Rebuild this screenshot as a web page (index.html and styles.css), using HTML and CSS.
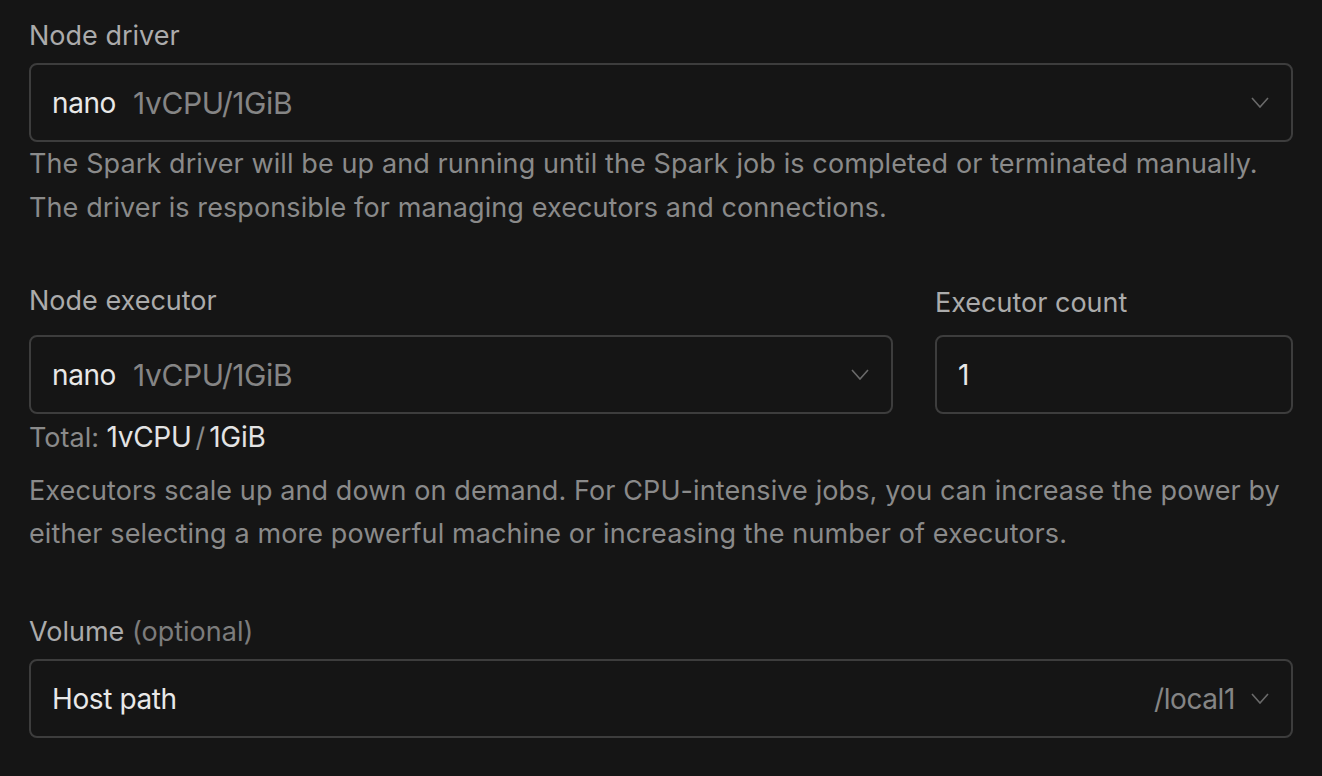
FILE: index.html
```html
<!DOCTYPE html>
<html lang="en">
<head>
<meta charset="utf-8">
<title>Spark settings</title>
<link rel="stylesheet" href="styles.css">
</head>
<body>
<main class="form">
  <section class="field field-driver">
    <label class="label">Node driver</label>
    <div class="select">
      <span class="value"><span class="main">nano</span><span class="sub">1vCPU/1GiB</span></span>
      <svg class="chev" width="18" height="11" viewBox="0 0 18 11"><path d="M1 1 L9 10 L17 1" fill="none" stroke="#6a6a6a" stroke-width="1.6"/></svg>
    </div>
    <p class="help">The Spark driver will be up and running until the Spark job is completed or terminated manually.<br>The driver is responsible for managing executors and connections.</p>
  </section>

  <section class="field field-exec">
    <div class="row">
      <div class="col col-main">
        <label class="label">Node executor</label>
        <div class="select">
          <span class="value"><span class="main">nano</span><span class="sub">1vCPU/1GiB</span></span>
          <svg class="chev" width="18" height="11" viewBox="0 0 18 11"><path d="M1 1 L9 10 L17 1" fill="none" stroke="#6a6a6a" stroke-width="1.6"/></svg>
        </div>
      </div>
      <div class="col col-count">
        <label class="label label-count">Executor count</label>
        <div class="input"><span class="main">1</span></div>
      </div>
    </div>
    <p class="total">Total: <span class="tv">1vCPU</span><span class="slash">/</span><span class="tv">1GiB</span></p>
    <p class="help help-exec">Executors scale up and down on demand. For CPU-intensive jobs, you can increase the power by<br>either selecting a more powerful machine or increasing the number of executors.</p>
  </section>

  <section class="field field-volume">
    <label class="label">Volume <span class="opt">(optional)</span></label>
    <div class="select">
      <span class="value"><span class="main main-lg">Host path</span></span>
      <span class="right"><span class="path">/local1</span>
      <svg class="chev" width="18" height="11" viewBox="0 0 18 11"><path d="M1 1 L9 10 L17 1" fill="none" stroke="#6a6a6a" stroke-width="1.6"/></svg></span>
    </div>
  </section>
</main>
</body>
</html>
```
FILE: styles.css
```css
html, body {
  margin: 0;
  padding: 0;
  background: #151515;
}
body {
  font-family: Inter, "Noto Sans", sans-serif;
  color: #e6e6e6;
  width: 1322px;
  height: 776px;
  overflow: hidden;
}
.form {
  padding: 18px 29px 0 29px;
  display: flex;
  flex-direction: column;
}
.field {
  display: flex;
  flex-direction: column;
}
.label {
  display: block;
  font-size: 27px;
  line-height: 36px;
  color: #ababab;
  margin-bottom: 9px;
}
.opt {
  color: #7c7c7c;
}
.select, .input {
  box-sizing: border-box;
  height: 79px;
  border: 2px solid #3d3d3d;
  border-radius: 8px;
  display: flex;
  align-items: center;
  justify-content: space-between;
  padding: 0 22px 0 21px;
}
.value {
  display: flex;
  align-items: center;
  gap: 17px;
}
.main {
  font-size: 28px;
  letter-spacing: -0.4px;
  color: #e8e8e8;
}
.main-lg {
  font-size: 28px;
  letter-spacing: -0.4px;
}
.sub {
  font-size: 30px;
  letter-spacing: -0.4px;
  color: #858585;
}
.chev {
  display: block;
}
.right {
  display: flex;
  align-items: center;
  gap: 16px;
}
.path {
  font-size: 28px;
  letter-spacing: -0.4px;
  color: #858585;
}
.help {
  margin: 0;
  font-size: 27px;
  line-height: 44px;
  color: #8a8a8a;
  letter-spacing: 0.1px;
}
.field-exec {
  margin-top: 53px;
}
.row {
  display: flex;
  gap: 42px;
}
.col-main {
  flex: 0 0 864px;
}
.col-count {
  flex: 1;
}
.field-exec .label {
  margin-bottom: 16px;
}
.field-exec .label-count {
  margin-top: 2px;
  margin-bottom: 14px;
}
.total {
  margin: 0;
  font-size: 27px;
  line-height: 46px;
  color: #8a8a8a;
}
.tv {
  font-size: 28px;
  letter-spacing: -0.3px;
  color: #e3e3e3;
}
.slash {
  color: #8a8a8a;
  margin: 0 4px;
}
.help-exec {
  margin-top: 8px;
  line-height: 43px;
}
.field-volume {
  margin-top: 59px;
}
.field-volume .label {
  margin-bottom: 9px;
}
```
